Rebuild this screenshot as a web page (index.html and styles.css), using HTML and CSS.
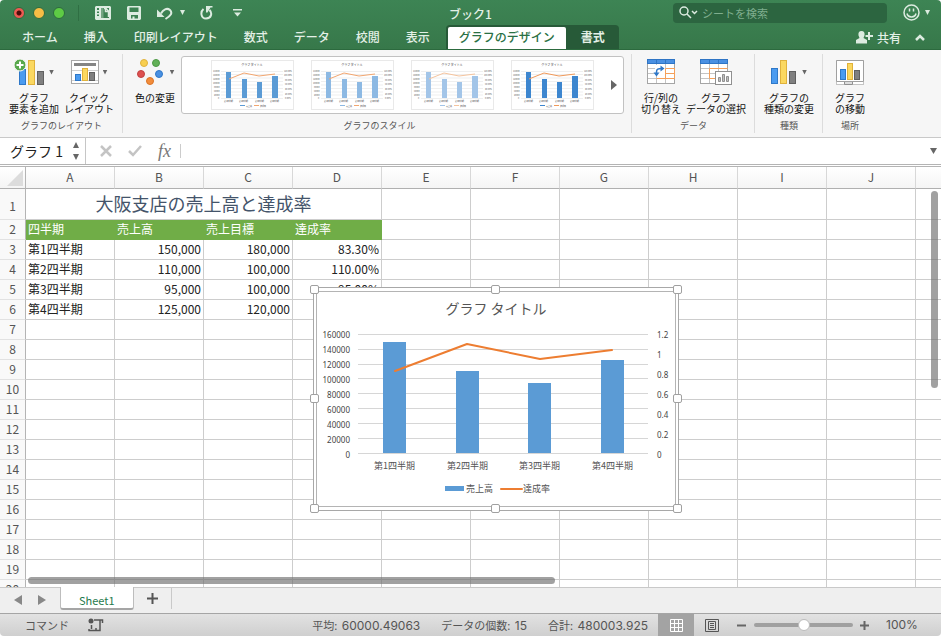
FILE: index.html
```
<!DOCTYPE html>
<html lang="ja">
<head>
	<meta charset="utf-8">
	<title>ブック1</title>
	<link rel="stylesheet" href="styles.css">
</head>
<body>
	<header class="window_head">
		<div class="title_bar">
			<div class="quick">
				<button class="light close" aria-label="閉じる"></button>
				<button class="light minimize" aria-label="最小化"></button>
				<button class="light zoom" aria-label="拡大"></button>
				<i class="quick_sep"></i>
				<button class="q_gallery" aria-label="ギャラリー"><svg width="16" height="14" viewBox="0 0 16 14"><path fill="#dcebe0" fill-rule="evenodd" d="M1 0H15L16 1V13L15 14H1L0 13V1ZM6 2V12H14V2ZM2 2V4H4V2ZM2 5.500V7H4V5.500ZM2 8.500V10H4V8.500Z"/><path fill="#dcebe0" d="M5 2H8.500V12H5Z" opacity=".35"/><path fill="none" stroke="#dcebe0" stroke-width="1.500" d="M9 2.500H11L13.500 5V11M10.500 2.500V5.500H13.500"/></svg></button>
				<button class="q_save" aria-label="保存"><svg width="14" height="14" viewBox="0 0 14 14"><path fill="#dcebe0" fill-rule="evenodd" d="M1 0H13L14 1V13L13 14H1L0 13V1ZM2.500 1.500V6H11.500V1.500ZM4 9V12.500H5.500V10.500H7.500V12.500H11V9Z"/></svg></button>
				<button class="q_undo" aria-label="元に戻す"><svg width="16" height="14" viewBox="0 0 16 14"><path fill="none" stroke="#dcebe0" stroke-width="2" d="M4 7.500C6 3.500 10 1.500 13 4C16 7 13.500 10 8.500 13"/><path fill="#dcebe0" d="M0 3.500V11H7.500Z"/></svg></button>
				<button class="caret q_undo_more" aria-label="元に戻す一覧"></button>
				<button class="q_redo" aria-label="やり直し"><svg width="13" height="14" viewBox="0 0 13 14"><path fill="none" stroke="#dcebe0" stroke-width="2" d="M3.500 3C0 6 1 12.500 6 12.500C11.500 12.500 12.500 7 9.500 4"/><path fill="#dcebe0" d="M6 0H12.500V1.500H10.500L7.500 6.500H6Z"/></svg></button>
				<button class="q_more" aria-label="カスタマイズ"><svg width="9" height="8" viewBox="0 0 9 8"><path fill="#dcebe0" d="M0 0H9V1.500H0ZM1 3.500H8L4.500 7.500Z"/></svg></button>
			</div>
			<h1>ブック1</h1>
			<div class="title_right">
				<div class="search">
					<svg width="19" height="13" viewBox="0 0 19 13"><circle cx="5" cy="5" r="4" fill="none" stroke="#dcebe0" stroke-width="1.500"/><path fill="none" stroke="#dcebe0" stroke-width="1.500" d="M8 8L12 12M13 5L15.500 7.500L18 5"/></svg>
					<input type="search" placeholder="シートを検索" aria-label="シートを検索">
				</div>
				<button class="smile" aria-label="フィードバック"><svg width="17" height="17" viewBox="0 0 17 17"><circle cx="8.500" cy="8.500" r="7.500" fill="none" stroke="#dcebe0" stroke-width="1.500"/><path fill="none" stroke="#dcebe0" stroke-width="1.500" d="M6.500 4.500V7.500M10.500 4.500V7.500M4 9.500C5 14 12 14 13 9.500"/></svg><i class="caret"></i></button>
			</div>
		</div>
		<nav class="tabs">
			<a href="#">ホーム</a>
			<a href="#">挿入</a>
			<a href="#">印刷レイアウト</a>
			<a href="#">数式</a>
			<a href="#">データ</a>
			<a href="#">校閲</a>
			<a href="#">表示</a>
			<div class="context_tabs">
				<a href="#" class="active">グラフのデザイン</a>
				<a href="#" class="format">書式</a>
			</div>
			<button class="share"><svg width="17" height="13" viewBox="0 0 17 13"><path fill="#dcebe0" d="M5.500 0C8 0 9 2 8.500 4.500L7.500 7L11 9V12.500H0V9L3.500 7L2.500 4.500C2 2 3 0 5.500 0ZM12 1H14V4H17V6H14V9H12V6H9.500V4H12Z"/></svg>共有</button>
			<button class="collapse" aria-label="リボンを折りたたむ"><svg width="10" height="7" viewBox="0 0 10 7"><path fill="none" stroke="#dcebe0" stroke-width="2.500" d="M1 6L5 2L9 6"/></svg></button>
		</nav>
	</header>

	<section class="ribbon">
		<div class="group">
			<div class="tools">
				<button class="tool">
					<span class="icon"><svg width="31" height="28" viewBox="0 0 31 28"><rect x="5.500" y="11.500" width="6" height="15" fill="#4a9bf0" stroke="#2f78c8"/><rect x="14.500" y="2.500" width="6" height="24" fill="#fbd860" stroke="#e0b23c"/><rect x="23.500" y="13.500" width="6" height="13" fill="#808080" stroke="#606060"/><circle cx="6" cy="7" r="6" fill="#58a84c" stroke="#f8f8f8"/><path d="M6 3.500V10.500M2.500 7H9.500" stroke="#fff" stroke-width="2"/></svg><i class="caret"></i></span>
					グラフ<br>要素を追加
				</button>
				<button class="tool">
					<span class="icon"><svg width="28" height="28" viewBox="0 0 28 28"><rect x=".5" y="2.500" width="27" height="23" fill="#fff" stroke="#a8a8a8"/><path d="M3 6.500H25" stroke="#858585" stroke-width="3"/><path d="M1 12.500H27M1 22.500H27" stroke="#d0d0d0"/><rect x="4.500" y="16.500" width="5" height="6" fill="#4a9bf0" stroke="#2f78c8"/><rect x="11.500" y="10.500" width="5" height="12" fill="#fbd860" stroke="#e0b23c"/><rect x="18.500" y="14.500" width="5" height="8" fill="#808080" stroke="#606060"/></svg><i class="caret"></i></span>
					クイック<br>レイアウト
				</button>
			</div>
			<h2>グラフのレイアウト</h2>
		</div>
		<div class="group styles">
			<div class="tools">
				<button class="tool">
					<span class="icon"><svg width="28" height="28" viewBox="0 0 28 28"><circle cx="8" cy="5" r="3.500" fill="#f8cf50" stroke="#e0b23c"/><circle cx="20" cy="5" r="3.500" fill="#62b058" stroke="#4d9944"/><circle cx="5" cy="16" r="3.500" fill="#dd5150" stroke="#c24140"/><circle cx="23" cy="16" r="3.500" fill="#4a90e2" stroke="#2f78c8"/><circle cx="14" cy="23" r="3.500" fill="#f28c3b" stroke="#da7426"/></svg><i class="caret"></i></span>
					色の変更
				</button>
				<div class="gallery">
					<!-- The first preview is reused by the others, recoloured with CSS variables -->
					<button class="style_a" aria-label="スタイル 1"><svg width="83" height="50" viewBox="0 0 83 50">
						<g id="preview">
							<rect x=".5" y=".5" width="82" height="49" fill="#fff" stroke="#e9e9e9"/>
							<text class="preview_title" x="41" y="6" text-anchor="middle">グラフ タイトル</text>
							<path d="M10 11.500H72M10 14.500H72M10 18H72M10 21.500H72M10 25H72M10 28.500H72M10 32H72M10 35H72M10 38.500H72" stroke="#e4e4e4" stroke-width=".6"/>
							<g class="preview_bars">
								<rect x="15" y="12" width="5" height="26"/>
								<rect x="31" y="19" width="5" height="19"/>
								<rect x="46" y="22" width="5" height="16"/>
								<rect x="61" y="16" width="6" height="22"/>
								<rect x="29" y="45" width="5" height="1"/>
							</g>
							<path class="preview_line" d="M18 19L33 13L48 16L64 14M43 45.500H48"/>
							<g class="preview_text">
								<text x="2" y="12">160000</text><text x="2" y="16">140000</text><text x="2" y="20">120000</text><text x="2" y="24">100000</text><text x="3" y="28">80000</text><text x="3" y="32">60000</text><text x="3" y="36">20000</text><text x="7" y="39">0</text>
								<text x="73" y="12">120.00%</text><text x="73" y="16">100.00%</text><text x="74" y="21">80.00%</text><text x="74" y="25">60.00%</text><text x="74" y="30">40.00%</text><text x="74" y="35">20.00%</text><text x="74" y="39">0.00%</text>
								<text x="13" y="42">第1四半期</text><text x="28" y="42">第2四半期</text><text x="44" y="42">第3四半期</text><text x="59" y="42">第4四半期</text>
								<text x="35" y="47">売上高</text><text x="49" y="47">達成率</text>
							</g>
						</g>
					</svg></button>
					<button class="style_b" aria-label="スタイル 2"><svg width="83" height="50"><use href="#preview"/></svg></button>
					<button class="style_c" aria-label="スタイル 3"><svg width="83" height="50"><use href="#preview"/></svg></button>
					<button class="style_d" aria-label="スタイル 4"><svg width="83" height="50"><use href="#preview"/></svg></button>
					<button class="gallery_next" aria-label="次へ"></button>
				</div>
			</div>
			<h2>グラフのスタイル</h2>
		</div>
		<div class="group">
			<div class="tools">
				<button class="tool">
					<span class="icon"><svg width="28" height="26" viewBox="0 0 28 26">
						<g id="table">
							<rect x=".5" y="4.500" width="27" height="20" fill="#fff" stroke="#a5a5a5"/>
							<path d="M9.500 5V24M18.500 5V24M1 9.500H27M1 14.500H27M1 19.500H27" stroke="#c4c4c4"/>
							<rect x=".5" y=".5" width="27" height="4" fill="#4a90e2" stroke="#2f75c5"/>
							<path d="M9.500 1V4M18.500 1V4" stroke="#2f75c5"/>
						</g>
						<path fill="none" stroke="#f5a05a" d="M19 9.500H27.500M27.500 9V19.500H9.500M19 14.500H27M18.500 9.500V19"/><path d="M8 6H18V16H8Z" fill="#fff"/><path fill="none" stroke="#2f78c8" stroke-width="1.500" d="M9.500 15V13C9.500 10 11 9.500 15 9.500"/><path fill="#2f78c8" d="M13.500 6.500L17.500 9.500L13.500 12.500ZM6.500 13.500H12.500L9.500 17.500Z"/></svg></span>
					行/列の<br>切り替え
				</button>
				<button class="tool">
					<span class="icon"><svg width="32" height="26" viewBox="0 0 32 26"><use href="#table"/><path fill="none" stroke="#f5a05a" d="M27.500 9.500H9.500V19.500H16"/><rect x="15.500" y="12.500" width="16" height="13" fill="#fff" stroke="#909090"/><path fill="#c0c0c0" stroke="#909090" d="M18.500 18.500H20.500V22.500H18.500ZM22.500 15.500H24.500V22.500H22.500ZM26.500 17.500H28.500V22.500H26.500Z"/></svg></span>
					グラフ<br>データの選択
				</button>
			</div>
			<h2>データ</h2>
		</div>
		<div class="group">
			<div class="tools">
				<button class="tool">
					<span class="icon"><svg width="27" height="28" viewBox="0 0 27 28"><rect x=".5" y="10.500" width="6" height="15" fill="#4a9bf0" stroke="#2f78c8"/><rect x="9.500" y="2.500" width="6" height="23" fill="#fbd860" stroke="#e0b23c"/><rect x="18.500" y="13.500" width="6" height="12" fill="#808080" stroke="#606060"/></svg><i class="caret"></i></span>
					グラフの<br>種類の変更
				</button>
			</div>
			<h2>種類</h2>
		</div>
		<div class="group">
			<div class="tools">
				<button class="tool">
					<span class="icon"><svg width="28" height="28" viewBox="0 0 28 28"><rect x=".5" y="2.500" width="27" height="24" fill="#fff" stroke="#c4c4c4"/><path fill="#ddd" stroke="#909090" d="M8.500 23.500H16.500V26.500H8.500Z"/><path fill="#fff" stroke="#a0a0a0" d="M.5 2.500H27.500V23.500H.5Z"/><rect x="4.500" y="11.500" width="5" height="10" fill="#4a9bf0" stroke="#2f78c8"/><rect x="11.500" y="5.500" width="5" height="16" fill="#fbd860" stroke="#e0b23c"/><rect x="18.500" y="12.500" width="5" height="9" fill="#808080" stroke="#606060"/></svg></span>
					グラフ<br>の移動
				</button>
			</div>
			<h2>場所</h2>
		</div>
	</section>

	<section class="formula_bar">
		<div class="name_box">
			<input type="text" value="グラフ 1" aria-label="名前ボックス">
			<svg width="8" height="18" viewBox="0 0 8 18"><path fill="#666" d="M1 6L4 0L7 6ZM1 12L4 18L7 12Z"/></svg>
		</div>
		<button class="cancel" aria-label="キャンセル"><svg width="12" height="12" viewBox="0 0 12 12"><path d="M1 1L11 11M11 1L1 11" stroke="#c4c4c4" stroke-width="2.500"/></svg></button>
		<button class="enter" aria-label="入力"><svg width="14" height="12" viewBox="0 0 14 12"><path fill="none" stroke="#c4c4c4" stroke-width="2.500" d="M1 6L5 10L13 1"/></svg></button>
		<button class="fx" aria-label="関数の挿入">fx</button>
		<input class="formula" type="text" aria-label="数式">
		<button class="expand" aria-label="数式バーを展開"></button>
	</section>

	<main class="sheet">
		<table>
			<colgroup><col class="head_col"><col span="11"></colgroup>
			<thead>
				<tr><th class="corner"><svg width="16" height="16" viewBox="0 0 16 16"><path fill="#dcdcdc" d="M16 0V16H0Z"/></svg></th><th>A</th><th>B</th><th>C</th><th>D</th><th>E</th><th>F</th><th>G</th><th>H</th><th>I</th><th>J</th><th></th></tr>
			</thead>
			<tbody>
				<tr class="title_row"><th>1</th><td colspan="4">大阪支店の売上高と達成率</td><td></td><td></td><td></td><td></td><td></td><td></td><td></td></tr>
				<tr class="label_row"><th>2</th><td>四半期</td><td>売上高</td><td>売上目標</td><td>達成率</td><td></td><td></td><td></td><td></td><td></td><td></td><td></td></tr>
				<tr><th>3</th><td>第1四半期</td><td class="num">150,000</td><td class="num">180,000</td><td class="num">83.30%</td><td></td><td></td><td></td><td></td><td></td><td></td><td></td></tr>
				<tr><th>4</th><td>第2四半期</td><td class="num">110,000</td><td class="num">100,000</td><td class="num">110.00%</td><td></td><td></td><td></td><td></td><td></td><td></td><td></td></tr>
				<tr><th>5</th><td>第3四半期</td><td class="num">95,000</td><td class="num">100,000</td><td class="num">95.00%</td><td></td><td></td><td></td><td></td><td></td><td></td><td></td></tr>
				<tr><th>6</th><td>第4四半期</td><td class="num">125,000</td><td class="num">120,000</td><td></td><td></td><td></td><td></td><td></td><td></td><td></td><td></td></tr>
				<tr><th>7</th><td></td><td></td><td></td><td></td><td></td><td></td><td></td><td></td><td></td><td></td><td></td></tr>
				<tr><th>8</th><td></td><td></td><td></td><td></td><td></td><td></td><td></td><td></td><td></td><td></td><td></td></tr>
				<tr><th>9</th><td></td><td></td><td></td><td></td><td></td><td></td><td></td><td></td><td></td><td></td><td></td></tr>
				<tr><th>10</th><td></td><td></td><td></td><td></td><td></td><td></td><td></td><td></td><td></td><td></td><td></td></tr>
				<tr><th>11</th><td></td><td></td><td></td><td></td><td></td><td></td><td></td><td></td><td></td><td></td><td></td></tr>
				<tr><th>12</th><td></td><td></td><td></td><td></td><td></td><td></td><td></td><td></td><td></td><td></td><td></td></tr>
				<tr><th>13</th><td></td><td></td><td></td><td></td><td></td><td></td><td></td><td></td><td></td><td></td><td></td></tr>
				<tr><th>14</th><td></td><td></td><td></td><td></td><td></td><td></td><td></td><td></td><td></td><td></td><td></td></tr>
				<tr><th>15</th><td></td><td></td><td></td><td></td><td></td><td></td><td></td><td></td><td></td><td></td><td></td></tr>
				<tr><th>16</th><td></td><td></td><td></td><td></td><td></td><td></td><td></td><td></td><td></td><td></td><td></td></tr>
				<tr><th>17</th><td></td><td></td><td></td><td></td><td></td><td></td><td></td><td></td><td></td><td></td><td></td></tr>
				<tr><th>18</th><td></td><td></td><td></td><td></td><td></td><td></td><td></td><td></td><td></td><td></td><td></td></tr>
				<tr><th>19</th><td></td><td></td><td></td><td></td><td></td><td></td><td></td><td></td><td></td><td></td><td></td></tr>
				<tr><th>20</th><td></td><td></td><td></td><td></td><td></td><td></td><td></td><td></td><td></td><td></td><td></td></tr>
			</tbody>
		</table>

		<!-- Floating chart object -->
		<figure class="chart">
			<svg width="358" height="214" viewBox="0 0 358 214">
				<text class="chart_title" x="179" y="22" text-anchor="middle">グラフ タイトル</text>
				<path d="M41 42.500H331M41 57.500H331M41 72.500H331M41 86.500H331M41 101.500H331M41 116.500H331M41 131.500H331M41 146.500H331M41 161.500H331" stroke="#d6d6d6"/>
				<g fill="#5b9bd5">
					<rect x="66" y="50" width="23" height="111"/>
					<rect x="139" y="79" width="23" height="82"/>
					<rect x="211" y="91" width="23" height="70"/>
					<rect x="284" y="68" width="23" height="93"/>
					<rect x="128" y="194" width="19" height="5"/>
				</g>
				<path d="M78 79L150 52L223 67L295 58M184 197H205" fill="none" stroke="#ed7d31" stroke-width="2" stroke-linejoin="round" stroke-linecap="round"/>
				<g class="axis" text-anchor="end">
					<text x="33" y="46">160000</text><text x="33" y="61">140000</text><text x="33" y="76">120000</text><text x="33" y="91">100000</text><text x="33" y="106">80000</text><text x="33" y="121">60000</text><text x="33" y="136">40000</text><text x="33" y="151">20000</text><text x="33" y="166">0</text>
				</g>
				<g class="axis">
					<text x="340" y="46">1.2</text><text x="340" y="66">1</text><text x="340" y="86">0.8</text><text x="340" y="106">0.6</text><text x="340" y="126">0.4</text><text x="340" y="146">0.2</text><text x="340" y="166">0</text>
				</g>
				<g class="category">
					<text x="57" y="177">第1四半期</text><text x="130" y="177">第2四半期</text><text x="202" y="177">第3四半期</text><text x="275" y="177">第4四半期</text>
					<text x="149" y="200">売上高</text><text x="206" y="200">達成率</text>
				</g>
			</svg>
			<i class="handle n w"></i><i class="handle n c"></i><i class="handle n e"></i>
			<i class="handle m w"></i><i class="handle m e"></i>
			<i class="handle s w"></i><i class="handle s c"></i><i class="handle s e"></i>
		</figure>
		<div class="scroll_y"></div>
		<div class="scroll_x"></div>
	</main>

	<nav class="sheet_tabs">
		<button class="prev" aria-label="前のシート"></button>
		<button class="next" aria-label="次のシート"></button>
		<a href="#" class="sheet_tab">Sheet1</a>
		<button class="add" aria-label="シートの追加"><svg width="11" height="11" viewBox="0 0 11 11"><path d="M5.500 0V11M0 5.500H11" stroke="#555" stroke-width="2"/></svg></button>
	</nav>

	<footer class="status">
		<span class="mode">コマンド</span>
		<button class="macro" aria-label="マクロの記録"><svg width="16" height="15" viewBox="0 0 16 15"><circle cx="3" cy="3" r="2.500" fill="#555"/><path fill="none" stroke="#555" stroke-width="1.500" d="M6 2H14.500V5M12 2V12.500H1V11M3.500 7V11M8 10V13"/></svg></button>
		<div class="sums">
			<span>平均: <b>60000.49063</b></span>
			<span>データの個数: <b>15</b></span>
			<span>合計: <b>480003.925</b></span>
		</div>
		<button class="view on" aria-label="標準"><svg width="13" height="13" viewBox="0 0 13 13"><path fill="none" stroke="#fff" d="M.5 .5H12.500V12.500H.5ZM4.500 0V13M8.500 0V13M0 4.500H13M0 8.500H13"/></svg></button>
		<button class="view" aria-label="ページ レイアウト"><svg width="14" height="13" viewBox="0 0 14 13"><path fill="none" stroke="#555" d="M.5 .5H13.500V12.500H.5ZM3.500 2.500H10.500V10.500H3.500ZM5 4.500H9M5 6.500H9M5 8.500H9"/></svg></button>
		<button class="zoom_out" aria-label="縮小"><svg width="9" height="9" viewBox="0 0 9 9"><path d="M0 4.500H9" stroke="#666" stroke-width="2"/></svg></button>
		<input class="zoom_range" type="range" min="0" max="100" value="50" aria-label="ズーム">
		<button class="zoom_in" aria-label="拡大"><svg width="9" height="9" viewBox="0 0 9 9"><path d="M0 4.500H9M4.500 0V9" stroke="#666" stroke-width="2"/></svg></button>
		<b class="percent">100%</b>
	</footer>
</body>
</html>
```
FILE: styles.css
```
* { box-sizing: border-box; }
body { margin: 0; height: 100vh; display: flex; flex-direction: column; overflow: hidden; background: #fff; color: #222; font-family: "Noto Sans CJK JP", sans-serif; font-size: 12px; }
button, input { margin: 0; padding: 0; border: 0; background: none; color: inherit; font: inherit; outline: 0; }
button { flex: none; display: flex; align-items: center; justify-content: center; }
svg { display: block; flex: none; }
a { color: inherit; text-decoration: none; }
h1, h2, figure { margin: 0; font-weight: normal; }
.caret { width: 5px; height: 5px; background: #666; clip-path: polygon(0 0, 100% 0, 50% 100%); }

/* Title bar and tabs */

.window_head { flex: none; background: linear-gradient(#3d8454, #37784a); color: #e4f0e7; border-bottom: 1px solid #2c6a3e; border-radius: 4px 4px 0 0; }
.window_head .caret { background: #dcebe0; }
.title_bar { display: grid; grid-template-columns: 1fr auto 1fr; align-items: center; height: 25px; }
.title_bar h1 { font-size: 12px; font-weight: 500; line-height: 20px; padding-top: 2px; }
.quick { display: flex; align-items: center; padding-left: 13px; }
.light { width: 12px; height: 12px; border-radius: 50%; margin-right: 8px; border: 1px solid #2c6a3e; }
.close { background: radial-gradient(circle, #4d0d0b 2px, #ee5a52 3px); }
.minimize { background: #f7bd45; }
.zoom { background: #5ecb45; }
.quick_sep { width: 1px; height: 16px; margin: 0 16px 0 5px; background: #2f6f43; }
.q_save { margin-left: 16px; }
.q_undo { margin-left: 16px; }
.q_undo_more { margin-left: 7px; }
.q_redo { margin-left: 15px; }
.q_more { margin-left: 20px; }
.title_right { display: flex; align-items: center; justify-content: flex-end; padding-right: 11px; }
.search { display: flex; align-items: center; width: 214px; height: 20px; padding-left: 6px; gap: 4px; border-radius: 4px; background: #2c6540; }
.search input { flex: 1; min-width: 0; font-size: 11px; }
.search input::placeholder { color: #7fae8e; opacity: 1; }
.smile { gap: 5px; margin-left: 16px; }
.tabs { display: flex; align-items: flex-end; height: 24px; padding-left: 9px; font-weight: 500; }
.tabs a { flex: none; height: 22px; padding: 0 13px; line-height: 20px; }
.context_tabs { display: flex; margin-left: 3px; padding: 2px 0 0 2px; border-radius: 4px 4px 0 0; background: #275a38; }
.context_tabs .active { padding: 0 11px; border-radius: 2px 2px 0 0; background: #fff; color: #2a7044; }
.context_tabs .format { padding: 0 14px 0 15px; font-weight: bold; }
.share { height: 24px; margin-left: auto; gap: 4px; font-weight: 500; }
.collapse { height: 24px; margin: 0 16px 0 14px; }

/* Ribbon */

.ribbon { display: flex; flex: none; height: 88px; padding: 4px 0; background: #f6f6f6; border-bottom: 1px solid #c9c9c9; }
.group { display: flex; flex-direction: column; justify-content: space-between; padding: 0 8px 0 9px; border-right: 1px solid #dcdcdc; }
.group:last-child { border: 0; padding: 0 12px; }
.group h2 { font-size: 9px; line-height: 14px; text-align: center; color: #555; }
.tools { display: flex; gap: 5px; }
.tool { flex-direction: column; font-size: 10px; line-height: 11px; color: #111; }
.icon { display: flex; align-items: center; height: 36px; gap: 4px; margin-bottom: 2px; }
.styles { padding: 0 7px 0 12px; }
.styles .tools { gap: 6px; }
.styles .tool { align-self: flex-start; }
.styles .icon { gap: 6px; }
.gallery { display: flex; align-items: center; gap: 17px; height: 58px; margin-top: 2px; padding: 0 6px 0 29px; border: 1px solid #c2c2c2; border-radius: 3px; background: #fff; }
.gallery_next { width: 6px; height: 10px; background: #666; clip-path: polygon(0 0, 100% 50%, 0 100%); }
.style_a { --bar: #5b9bd5; --line: #f2a670; }
.style_b { --bar: #8db9e3; --line: #f2a670; }
.style_c { --bar: #a3c5e8; --line: #f5c49e; }
.style_d { --bar: #3d86cf; --line: #f0995a; }
.preview_bars { fill: var(--bar); }
.preview_line { fill: none; stroke: var(--line); }
.preview_title { font-size: 3px; fill: #444; }
.preview_text { font-size: 2px; fill: #555; }

/* Formula bar */

.formula_bar { display: flex; align-items: center; flex: none; height: 29px; border-bottom: 3px double #b4b4b4; }
.name_box { display: flex; align-items: center; align-self: stretch; width: 86px; padding: 0 5px 0 10px; border-right: 1px solid #c6c6c6; }
.name_box input { flex: 1; min-width: 0; height: 22px; font-size: 14px; color: #222; }
.cancel { margin-left: 14px; }
.enter { margin-left: 16px; }
.fx { margin: 0 9px 0 16px; font: italic 18px/20px "Liberation Serif", serif; color: #777; }
.formula { flex: 1; min-width: 0; height: 14px; border-left: 1px solid #ccc; }
.expand { width: 7px; height: 6px; margin-right: 4px; background: #666; clip-path: polygon(0 0, 100% 0, 50% 100%); }

/* Sheet */

.sheet { position: relative; flex: 1; min-height: 0; overflow: hidden; }
table { table-layout: fixed; width: 1005px; min-width: 100%; border-collapse: separate; border-spacing: 0; }
col { width: 89px; }
.head_col { width: 26px; }
th, td { height: 20px; padding: 0 2px 2px; border: 1px solid #cdcdcd; border-width: 0 1px 1px 0; line-height: 17px; text-align: left; white-space: nowrap; }
th { font-weight: normal; text-align: center; color: #555; background: #f9f9f9; border-right-color: #b4b4b4; }
thead th { height: 22px; border-bottom-color: #b0b0b0; border-right-color: #d8d8d8; background: linear-gradient(#fff, #f5f5f5); }
.corner { padding: 0 2px 0 7px; border-right-color: #b4b4b4; }
tbody th { border-bottom-color: #e2e2e2; }
.title_row td, .title_row th { height: 31px; }
.title_row td { font-size: 18px; line-height: 27px; color: #44546a; text-align: center; }
.title_row th { padding-top: 4px; }
.label_row td:nth-child(-n+5) { background: #70ad47; border-color: #70ad47; color: #fff; }
td.num { text-align: right; }
.scroll_x, .scroll_y { position: absolute; border-radius: 4px; background: rgba(110, 110, 110, .65); }
.scroll_x { left: 28px; bottom: 3px; width: 56%; height: 7px; }
.scroll_y { right: 3px; top: 24px; width: 7px; height: 197px; }

/* Chart */

.chart { position: absolute; left: 313px; top: 120px; padding: 3px 2px; border: 1px solid #a8a8a8; background: #fff; }
.chart > svg { box-sizing: content-box; border: 1px solid #b4b4b4; }
.chart_title { font-size: 14px; fill: #555; }
.axis { font-family: "Noto Sans", sans-serif; font-size: 8px; fill: #444; }
.category { font-size: 9px; fill: #555; }
.handle { position: absolute; width: 9px; height: 9px; border: 1px solid #a0a0a0; border-radius: 2px; background: #fff; }
.handle.n { top: -3px; }
.handle.m { top: calc(50% - 5px); }
.handle.s { bottom: -3px; }
.handle.w { left: -4px; }
.handle.c { left: calc(50% - 5px); }
.handle.e { right: -4px; }

/* Sheet tabs */

.sheet_tabs { display: flex; flex: none; height: 26px; border-top: 1px solid #c9c9c9; background: #efefef; }
.prev, .next { width: 8px; height: 10px; margin-top: 7px; background: #888; }
.prev { margin-left: 14px; clip-path: polygon(100% 0, 100% 100%, 0 50%); }
.next { margin-left: 16px; clip-path: polygon(0 0, 100% 50%, 0 100%); }
.sheet_tab { height: 23px; margin: -1px 0 0 14px; padding: 3px 18px 0; border: 1px solid #bdbdbd; border-top: 0; border-bottom: 2px solid #a5a5a5; border-radius: 0 0 3px 3px; background: #fff; color: #1f7a4d; font-size: 11px; line-height: 20px; }
.add { width: 38px; height: 21px; border-right: 1px solid #c9c9c9; }

/* Status bar */

.status { display: flex; align-items: center; flex: none; height: 23px; border-top: 1px solid #a5a5a5; border-radius: 0 0 4px 4px; background: linear-gradient(#e2e2e2, #cfcfcf); color: #555; font-size: 11px; line-height: 20px; white-space: nowrap; }
.status b { font-family: Inter, sans-serif; font-size: 12px; font-weight: normal; }
.mode { margin-left: 25px; }
.macro { margin-left: 19px; }
.sums { display: flex; gap: 21px; margin: 0 10px 0 auto; }
.sums b { margin-left: 2px; }
.view { width: 36px; align-self: stretch; }
.view.on { background: #a3a3a3; }
.zoom_out { margin-left: 7px; }
.zoom_range { appearance: none; width: 99px; height: 12px; margin: 0 7px 0 8px; }
.zoom_range::-webkit-slider-runnable-track { height: 4px; border-radius: 2px; background: #a0a0a0; }
.zoom_range::-webkit-slider-thumb { appearance: none; width: 12px; height: 12px; margin-top: -4px; border: 1px solid #bbb; border-radius: 50%; background: #fff; }
.percent { width: 31px; margin: 0 24px 0 17px; }
```
